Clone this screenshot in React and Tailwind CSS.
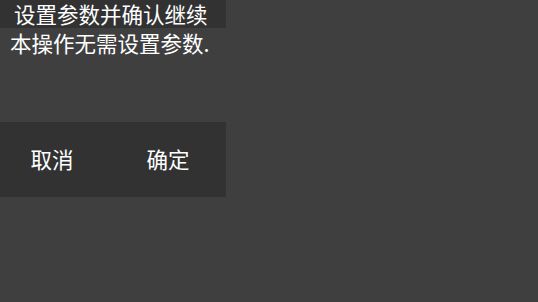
import React from 'react';

const App = () => {
  return (
    <div
      className="w-[538px] h-[302px] bg-[#3f3f3f] text-white overflow-hidden"
      style={{ fontFamily: '"Noto Sans CJK SC", "Noto Sans", sans-serif' }}
    >
      <div className="w-[226px]">
        {/* title */}
        <div className="h-[28px] bg-[#323232] pl-[14px] text-[21.5px] leading-[28px] whitespace-nowrap">
          设置参数并确认继续
        </div>
        {/* message */}
        <div className="h-[94px] pl-[10px] pt-[1px] text-[21.5px] leading-[28px] whitespace-nowrap">
          本操作无需设置参数.
        </div>
        {/* buttons */}
        <div className="h-[75px] bg-[#323232] flex gap-[12px]">
          <button className="w-[104px] text-[21.5px] text-white">取消</button>
          <button className="w-[104px] text-[21.5px] text-white">确定</button>
        </div>
      </div>
    </div>
  );
};

export default App;
